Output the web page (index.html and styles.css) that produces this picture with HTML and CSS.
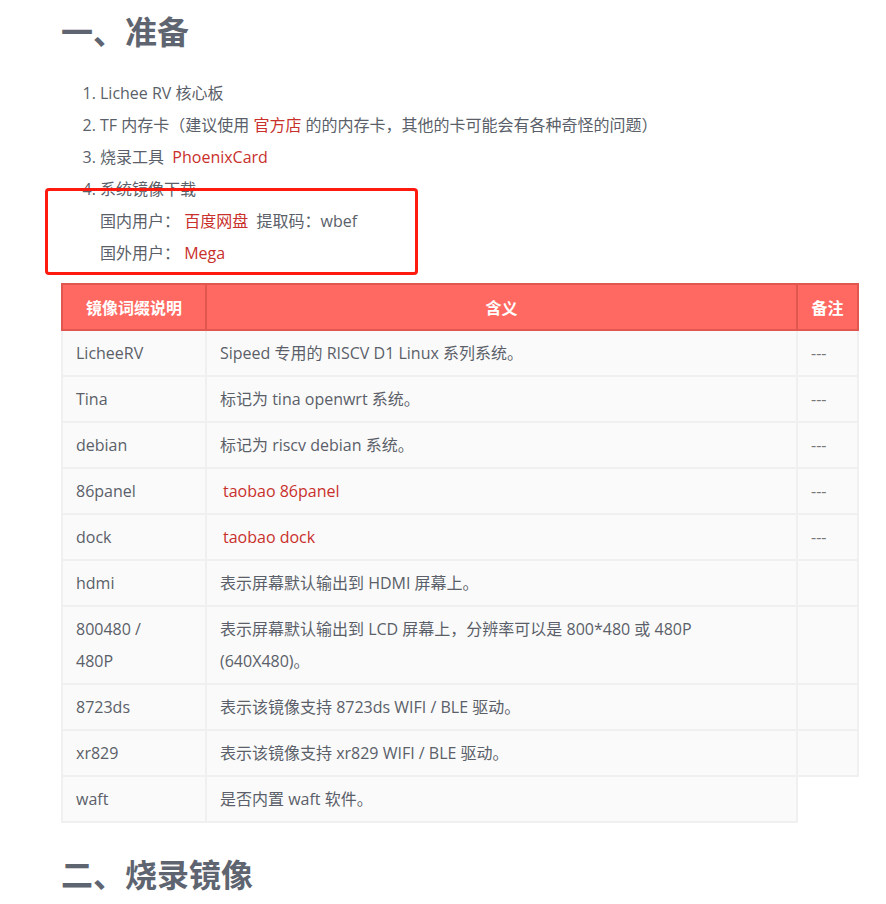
FILE: index.html
```html
<!DOCTYPE html>
<html lang="zh-CN">

<head>
    <meta charset="UTF-8">
    <meta name="viewport" content="width=device-width, initial-scale=1.0">
    <title>Lichee RV 烧录</title>
    <link rel="stylesheet" href="styles.css">
</head>

<body>
    <div class="doc">
        <h2 class="section-title">一、准备</h2>

        <div class="prep">
            <ol class="prep-list">
                <li>Lichee RV 核心板</li>
                <li>TF 内存卡（建议使用 <a class="link" href="#">官方店</a> 的的内存卡，其他的卡可能会有各种奇怪的问题）</li>
                <li>烧录工具&nbsp; <a class="link" href="#">PhoenixCard</a></li>
                <li>系统镜像下载<br>
                    国内用户：&nbsp;<a class="link" href="#">百度网盘</a>&nbsp; 提取码：wbef<br>
                    国外用户：&nbsp;<a class="link" href="#">Mega</a>
                </li>
            </ol>
            <div class="mark-box"></div>
        </div>

        <table class="suffix-table">
            <thead>
                <tr>
                    <th class="col-name">镜像词缀说明</th>
                    <th class="col-desc">含义</th>
                    <th class="col-note">备注</th>
                </tr>
            </thead>
            <tbody>
                <tr>
                    <td>LicheeRV</td>
                    <td>Sipeed 专用的 RISCV D1 Linux 系列系统。</td>
                    <td class="note">---</td>
                </tr>
                <tr>
                    <td>Tina</td>
                    <td>标记为 tina openwrt 系统。</td>
                    <td class="note">---</td>
                </tr>
                <tr>
                    <td>debian</td>
                    <td>标记为 riscv debian 系统。</td>
                    <td class="note">---</td>
                </tr>
                <tr>
                    <td>86panel</td>
                    <td><a class="link shop" href="#">taobao 86panel</a></td>
                    <td class="note">---</td>
                </tr>
                <tr>
                    <td>dock</td>
                    <td><a class="link shop" href="#">taobao dock</a></td>
                    <td class="note">---</td>
                </tr>
                <tr>
                    <td>hdmi</td>
                    <td>表示屏幕默认输出到 HDMI 屏幕上。</td>
                    <td></td>
                </tr>
                <tr>
                    <td>800480 /<br>480P</td>
                    <td>表示屏幕默认输出到 LCD 屏幕上，分辨率可以是 800*480 或 480P<br>(640X480)。</td>
                    <td></td>
                </tr>
                <tr>
                    <td>8723ds</td>
                    <td>表示该镜像支持 8723ds WIFI / BLE 驱动。</td>
                    <td></td>
                </tr>
                <tr>
                    <td>xr829</td>
                    <td>表示该镜像支持 xr829 WIFI / BLE 驱动。</td>
                    <td></td>
                </tr>
                <tr>
                    <td>waft</td>
                    <td>是否内置 waft 软件。</td>
                </tr>
            </tbody>
        </table>

        <h2 class="section-title">二、烧录镜像</h2>
    </div>
</body>

</html>
```

FILE: styles.css
```css
body {
    margin: 0;
    padding: 0;
    background-color: #fff;
    color: #5a5f69;
    font-family: "Open Sans", "Noto Sans CJK SC", sans-serif;
    font-size: 16px;
    line-height: 32px;
}

.doc {
    padding: 0 27px 0 61px;
}

.section-title {
    margin: 0;
    font-size: 32px;
    line-height: 60px;
    font-weight: bold;
    color: #5e6570;
    font-family: "Noto Sans CJK SC", sans-serif;
}

.prep {
    position: relative;
    margin-top: 17px;
}

.prep-list {
    margin: 0;
    padding-left: 39px;
}

.link {
    color: #c9302c;
    text-decoration: none;
}

.shop {
    margin-left: 3px;
}

/* red annotation frame drawn over the download lines */
.mark-box {
    position: absolute;
    left: -16px;
    top: 111px;
    width: 367px;
    height: 81px;
    border: 3px solid #ff1a10;
    border-radius: 4px;
}

.suffix-table {
    width: 798px;
    margin-top: 14px;
    margin-bottom: 20px;
    border-collapse: collapse;
}

.suffix-table th,
.suffix-table td {
    padding: 6px 13px;
    text-align: left;
    vertical-align: top;
}

.suffix-table th {
    background-color: #ff6961;
    color: #fff;
    font-weight: bold;
    text-align: center;
    border: 2px solid #e0574f;
    font-family: "Noto Sans CJK SC", sans-serif;
}

.suffix-table td {
    background-color: #fafafa;
    border: 2px solid #f0f0f0;
}

.col-name {
    width: 116px;
}

.col-note {
    width: 33px;
}

.note {
    text-align: center;
    color: #777;
}
```
